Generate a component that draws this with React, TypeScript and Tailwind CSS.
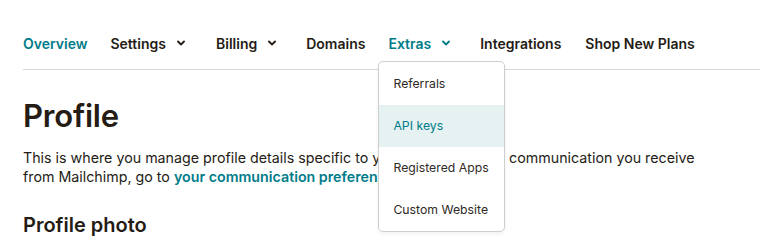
import { ReactNode } from "react";

const Chevron = () => (
  <svg width="8" height="6" viewBox="0 0 8 6" className="ml-[11px]" aria-hidden>
    <path d="M1 1.5 L4 4.5 L7 1.5" fill="none" stroke="currentColor" strokeWidth="1.8" strokeLinecap="round" strokeLinejoin="round" />
  </svg>
);

function NavItem({ children, active, caret, className = "" }: { children: ReactNode; active?: boolean; caret?: boolean; className?: string }) {
  return (
    <a className={`flex h-[20px] items-center text-[14px] font-semibold ${active ? "text-[#007c89]" : "text-[#241c15]"} ${className}`}>
      {children}
      {caret && <Chevron />}
    </a>
  );
}

const menu = ["Referrals", "API keys", "Registered Apps", "Custom Website"];

export default function App() {
  return (
    <div className="h-[248px] w-[760px] overflow-hidden bg-white pl-[23px] font-['Inter',sans-serif] text-[#241c15]">
      <nav className="flex h-[70px] items-end border-b border-[#d9d9d9] pb-[16px]">
        <NavItem active className="mr-[23px]">Overview</NavItem>
        <NavItem caret className="mr-[31px]">Settings</NavItem>
        <NavItem caret className="mr-[30px]">Billing</NavItem>
        <NavItem className="mr-[23px]">Domains</NavItem>
        <div className="relative mr-[30px]">
          <NavItem active caret>Extras</NavItem>
          <div className="absolute left-[-10px] top-[28px] z-10 w-[127px] overflow-hidden rounded-[5px] border border-[#cfcfcf] bg-white pt-[1px] shadow-[0_2px_4px_rgba(0,0,0,0.06)]">
            {menu.map((m) => (
              <div
                key={m}
                className={`flex h-[42px] items-center whitespace-nowrap px-[14px] text-[12.25px] ${m === "API keys" ? "bg-[#e6f2f2] text-[#007c89]" : "text-[#2f2a26]"}`}
              >
                {m}
              </div>
            ))}
          </div>
        </div>
        <NavItem className="mr-[24px]">Integrations</NavItem>
        <NavItem>Shop New Plans</NavItem>
      </nav>
      <h1 className="mt-[26px] text-[31px] font-semibold leading-[40px] tracking-[-0.2px]">Profile</h1>
      <p className="mt-[12px] whitespace-nowrap text-[14.25px] leading-[19px] text-[#241c15]">
        This is where you manage profile details specific to you. To manage the communication you receive
        <br />
        from Mailchimp, go to <a className="font-semibold text-[#007c89]">your communication preferences</a>.
      </p>
      <h2 className="mt-[24px] text-[20px] font-semibold leading-[30px]">Profile photo</h2>
    </div>
  );
}
